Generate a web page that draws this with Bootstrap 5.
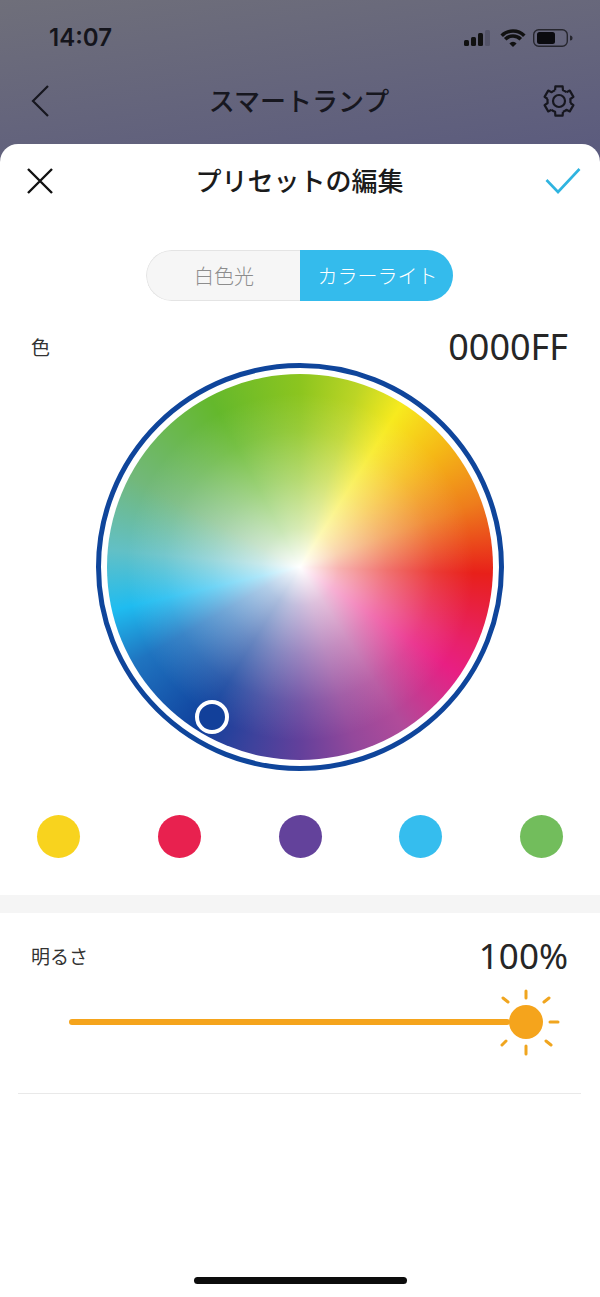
<!DOCTYPE html>
<html lang="ja">
<head>
    <meta charset="UTF-8">
    <title>プリセットの編集</title>
    <link href="https://cdn.jsdelivr.net/npm/bootstrap@5.3.2/dist/css/bootstrap.min.css" rel="stylesheet">
    <style>
        html, body { height: 100%; }
        body {
            width: 600px;
            height: 1297px;
            overflow: hidden;
            background: #fff linear-gradient(172deg, #6f6f7a 0%, #5a5a7e 100%) top / 100% 165px no-repeat;
            font-family: "Noto Sans", "Noto Sans CJK JP", sans-serif;
            color: #222;
        }
        .top-area { height: 144px; color: #17171f; }
        .status-row { height: 76px; padding: 20px 26px 0 49px; }
        .clock { font-family: Inter, sans-serif; font-size: 24px; font-weight: 600; line-height: 36px; color: #15151c; }
        .app-row { height: 50px; padding: 0 24px 0 30px; }
        .app-title { font-family: "Noto Sans CJK JP", sans-serif; font-size: 26px; font-weight: 500; margin: 0 0 4px 4px; }
        .sheet { height: 1153px; background: #fff; border-radius: 18px 18px 0 0; }
        .sheet-head { height: 74px; padding: 0 19px 0 26px; }
        .sheet-title { font-family: "Noto Sans CJK JP", sans-serif; font-size: 26px; font-weight: 500; color: #1b1b1b; margin-bottom: 4px; }
        .seg-wrap { margin-top: 32px; height: 51px; padding-right: 2px; }
        .seg { width: 307px; height: 51px; border-radius: 26px; overflow: hidden; font-family: "Noto Sans CJK JP", sans-serif; font-size: 20px; font-weight: 300; }
        .seg-off { width: 154px; padding-left: 2px; background: #f6f6f6; border: 1px solid #e4e4e4; border-right: 0; border-radius: 26px 0 0 26px; color: #8d8d8d; }
        .seg-on { width: 153px; padding-left: 3px; background: #34bbec; color: #fff; }
        .color-row { padding: 29px 32px 0 31px; height: 62px; }
        .bright-row { padding: 11px 32px 0 31px; height: 74px; }
        .small-label { font-family: "Noto Sans CJK JP", sans-serif; font-size: 19px; line-height: 26px; color: #333; }
        .big-value { font-family: "Noto Sans", sans-serif; font-size: 36px; line-height: 36px; color: #262626; }
        .big-value-sm { font-size: 35px; }
        .wheel-ring { width: 408px; height: 408px; border: 5px solid #0f459b; border-radius: 50%; padding: 6px; background: #fff; position: relative; }
        .wheel {
            width: 100%; height: 100%; border-radius: 50%;
            background:
                radial-gradient(circle closest-side, #fff 0%, rgba(255,255,255,.88) 7%, rgba(255,255,255,.66) 20%, rgba(255,255,255,.37) 45%, rgba(255,255,255,.12) 70%, rgba(255,255,255,0) 90%),
                conic-gradient(#8cc51f 0deg, #bcd525 18deg, #f7ea1e 32deg, #f5b816 50deg, #ee7d1c 70deg, #e8201a 92deg, #e8216a 115deg, #e81f83 124deg, #b14b9a 147deg, #93489b 163deg, #63409b 180deg, #3e429c 195deg, #10409c 212deg, #1f74c0 240deg, #1fbcf0 257deg, #62c0c6 275deg, #72b87a 298deg, #64b82c 332deg, #8cc51f 360deg);
        }
        .wheel-thumb { position: absolute; left: 94px; top: 332px; width: 34px; height: 34px; border: 4px solid #fff; border-radius: 50%; background: #12409a; }
        .swatches { margin-top: 44px; padding: 0 37px; height: 43px; }
        .swatch { width: 43px; height: 43px; border-radius: 50%; }
        .sw-yellow { background: #f8d31e; }
        .sw-red { background: #e8214f; }
        .sw-purple { background: #63429b; }
        .sw-blue { background: #35bdee; }
        .sw-green { background: #72bd5c; }
        .gap-band { margin-top: 37px; height: 18px; background: #f5f5f5; }
        .slider-row { height: 70px; padding-left: 69px; }
        .slider-line { width: 441px; height: 6px; background: #f5a41c; border-radius: 3px; }
        .sun { width: 64px; height: 64px; margin-left: -15px; flex: none; overflow: visible; }
        .rule { margin: 36px 19px 0 18px; border-top: 1px solid #e9e9e9; }
        .home-bar { position: absolute; left: 194px; top: 1277px; width: 213px; height: 7px; border-radius: 4px; background: #0c0c0c; }
    </style>
</head>
<body>

<div class="top-area">
    <div class="status-row d-flex justify-content-between align-items-start">
        <span class="clock">14:07</span>
        <svg width="110" height="24" viewBox="0 0 110 24" class="mt-2" aria-hidden="true">
            <rect x="0" y="12" width="5" height="6" rx="1.500" fill="#111"/>
            <rect x="7" y="9" width="5" height="9" rx="1.500" fill="#111"/>
            <rect x="14" y="5" width="5" height="13" rx="1.500" fill="#111"/>
            <rect x="21" y="2" width="5" height="16" rx="1.500" fill="#55556a"/>
            <path d="M37.700 7.700a16 16 0 0 1 22.600 0M41.200 11.200a11 11 0 0 1 15.600 0" fill="none" stroke="#111" stroke-width="3.600"/>
            <path d="M49 19l-3.600-3.600a5 5 0 0 1 7.200 0z" fill="#111"/>
            <rect x="69.700" y="1.700" width="33.600" height="16.600" rx="5" fill="none" stroke="#26262e" stroke-width="1.400"/>
            <rect x="73" y="4" width="18" height="12" rx="2.500" fill="#0b0b0f"/>
            <path d="M106 7.500v5a2.500 2.500 0 0 0 0-5z" fill="#26262e"/>
        </svg>
    </div>
    <div class="app-row d-flex justify-content-between align-items-center">
        <svg width="22" height="32" viewBox="0 0 22 32" aria-hidden="true"><path d="M18 1 3 16l15 15" fill="none" stroke="#17171f" stroke-width="2.200"/></svg>
        <span class="app-title">スマートランプ</span>
        <svg width="34" height="34" viewBox="-1 -1 34 34" aria-hidden="true" fill="none" stroke="#17171f" stroke-width="2.200" stroke-linejoin="round">
            <circle cx="16" cy="16" r="6"/>
            <path d="M12.070 5.200 12.370 1.450H19.630L19.930 5.200A11.500 11.500 0 0 1 23.390 7.190"/>
            <path transform="rotate(60 16 16)" d="M12.070 5.200 12.370 1.450H19.630L19.930 5.200A11.500 11.500 0 0 1 23.390 7.190"/>
            <path transform="rotate(120 16 16)" d="M12.070 5.200 12.370 1.450H19.630L19.930 5.200A11.500 11.500 0 0 1 23.390 7.190"/>
            <path transform="rotate(180 16 16)" d="M12.070 5.200 12.370 1.450H19.630L19.930 5.200A11.500 11.500 0 0 1 23.390 7.190"/>
            <path transform="rotate(240 16 16)" d="M12.070 5.200 12.370 1.450H19.630L19.930 5.200A11.500 11.500 0 0 1 23.390 7.190"/>
            <path transform="rotate(300 16 16)" d="M12.070 5.200 12.370 1.450H19.630L19.930 5.200A11.500 11.500 0 0 1 23.390 7.190"/>
        </svg>
    </div>
</div>

<div class="sheet">
    <div class="sheet-head d-flex justify-content-between align-items-center">
        <svg width="28" height="28" viewBox="0 0 28 28" aria-hidden="true"><path d="M2 2l24 24M26 2 2 26" fill="none" stroke="#111" stroke-width="2.400"/></svg>
        <span class="sheet-title">プリセットの編集</span>
        <svg width="36" height="28" viewBox="0 0 36 28" aria-hidden="true"><path d="M1.500 13 13 25 34.500 2" fill="none" stroke="#2fb4e0" stroke-width="2.600"/></svg>
    </div>

    <div class="seg-wrap d-flex justify-content-center">
        <div class="seg d-flex">
            <div class="seg-off d-flex align-items-center justify-content-center">白色光</div>
            <div class="seg-on d-flex align-items-center justify-content-center">カラーライト</div>
        </div>
    </div>

    <div class="color-row d-flex justify-content-between align-items-center">
        <span class="small-label">色</span>
        <span class="big-value">0000FF</span>
    </div>

    <div class="d-flex justify-content-center">
        <div class="wheel-ring">
            <div class="wheel"></div>
            <div class="wheel-thumb"></div>
        </div>
    </div>

    <div class="swatches d-flex justify-content-between">
        <div class="swatch sw-yellow"></div>
        <div class="swatch sw-red"></div>
        <div class="swatch sw-purple"></div>
        <div class="swatch sw-blue"></div>
        <div class="swatch sw-green"></div>
    </div>

    <div class="gap-band"></div>

    <div class="bright-row d-flex justify-content-between align-items-center">
        <span class="small-label">明るさ</span>
        <span class="big-value big-value-sm">100%</span>
    </div>

    <div class="slider-row d-flex align-items-center">
        <div class="slider-line"></div>
        <svg class="sun" viewBox="0 0 64 64" aria-hidden="true">
            <circle cx="31" cy="32" r="17" fill="#f5a41c"/>
            <g stroke="#f0a51f" stroke-width="3" stroke-linecap="round" fill="none">
                <path d="M31 1v7M31 56v8M55 32h8"/>
                <path d="M8 8l5 4M54 8l-5 4M7 55l4-4M56 55l-5-4"/>
            </g>
        </svg>
    </div>

    <div class="rule"></div>
</div>

<div class="home-bar"></div>

<script src="https://cdn.jsdelivr.net/npm/bootstrap@5.3.2/dist/js/bootstrap.bundle.min.js"></script>
</body>
</html>
